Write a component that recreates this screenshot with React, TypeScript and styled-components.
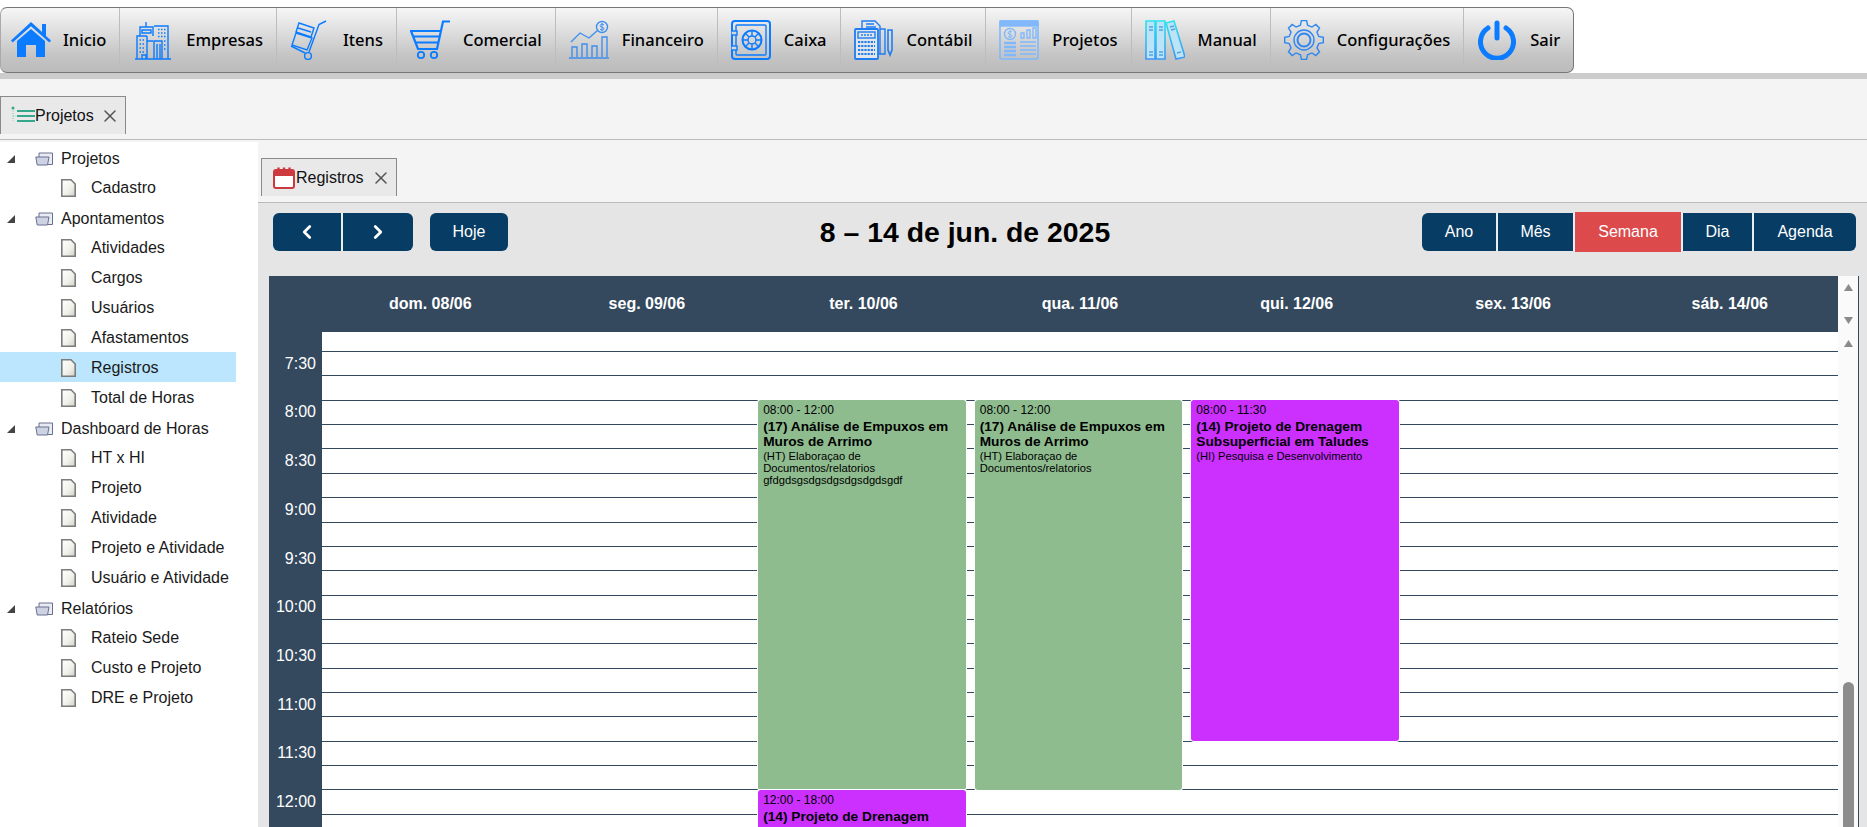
import React from 'react'
import styled, { createGlobalStyle } from 'styled-components'
import { ChevronLeft, ChevronRight, X } from 'lucide-react'

const GlobalStyle = createGlobalStyle`
  html, body {
    margin: 0;
    padding: 0;
    background: #f4f4f4;
    font-family: "Liberation Sans", Arial, sans-serif;
    overflow: hidden;
  }
`

const Page = styled.div`
  height: 100vh;
  display: flex;
  flex-direction: column;
  overflow: hidden;
`
const TopArea = styled.header`
  background: #fff;
  padding-top: 7px;
  border-bottom: 6px solid #cccccc;
`
const Toolbar = styled.nav`
  width: 1574px;
  height: 66px;
  box-sizing: border-box;
  display: flex;
  background: linear-gradient(#f6f6f6 0%, #e6e6e6 25%, #c4c4c4 75%, #bcbcbc 100%);
  border: 1px solid #777;
  border-left-color: #aaa;
  border-radius: 7px;
`
const ToolItem = styled.a`
  display: flex;
  align-items: center;
  gap: 13px;
  padding: 0 13px 0 13px;
  border-right: 1px solid #bdbdbd;
  font-family: "Noto Sans", "Open Sans", sans-serif;
  font-weight: 500;
  font-size: 16.5px;
  line-height: 22px;
  color: #000;
  &:first-child { padding-left: 10px; gap: 12px; }
  &:last-child { border-right: 0; }
`
const TabStrip = styled.div`
  height: 61px;
  box-sizing: border-box;
  padding-top: 17px;
  padding-left: ${p => p.$inset}px;
  background: #f4f4f4;
  border-bottom: 1px solid #bbb;
  flex: none;
`
const InnerStrip = styled(TabStrip)`
  height: 63px;
  padding-top: 18px;
`
const Tab = styled.div`
  display: inline-flex;
  align-items: center;
  height: 38px;
  box-sizing: border-box;
  padding: 0 5px 0 ${p => p.$pad}px;
  gap: ${p => p.$gap}px;
  background: #e9e9e9;
  border: 1px solid #8a8a8a;
  border-bottom: 0;
  font-size: 16px;
  color: #111;
`
const CloseIcon = styled(X)`
  margin-left: 6px;
  color: #555;
`
const Main = styled.div`
  flex: 1;
  display: flex;
  min-height: 0;
`
const Sidebar = styled.aside`
  width: 258px;
  flex: none;
  box-sizing: border-box;
  margin-top: 2px;
  padding-right: 22px;
  background: #fff;
`
const TreeRow = styled.div`
  height: 30px;
  box-sizing: border-box;
  display: flex;
  align-items: center;
  font-size: 16px;
  color: #1a1a1a;
  background: ${p => (p.$selected ? '#bbe6fd' : 'transparent')};
  padding-left: ${p => (p.$parent ? 7 : 61)}px;
  padding-top: ${p => (p.$parent ? 3 : 1)}px;
`
const TreeLabel = styled.span`
  margin-left: ${p => (p.$parent ? 8 : 15)}px;
`
const Panel = styled.section`
  flex: 1;
  min-width: 0;
  display: flex;
  flex-direction: column;
  background: #e5e5e5;
`
const Calendar = styled.div`
  flex: 1;
  min-height: 0;
  padding: 9px 8px 0 11px;
  display: flex;
  flex-direction: column;
`
const CalToolbar = styled.div`
  display: flex;
  justify-content: space-between;
  align-items: center;
  height: 40px;
  padding: 0 3px 0 4px;
  margin-bottom: 24px;
`
const ButtonGroup = styled.div`
  display: flex;
  align-items: center;
  gap: ${p => p.$gap || 0}px;
`
const CalTitle = styled.h2`
  margin: 0;
  font-size: 28.4px;
  font-weight: 700;
  color: #000;
`
const CalButton = styled.button`
  height: ${p => (p.$active ? 40 : 38)}px;
  width: ${p => p.$w}px;
  padding: 0;
  display: flex;
  align-items: center;
  justify-content: center;
  border: 0;
  border-right: ${p => (p.$joined ? '2px solid #e8eef2' : '0')};
  border-radius: ${p => p.$radius || '0'};
  background: ${p => (p.$active ? '#dc4a4b' : '#073c64')};
  color: #fff;
  font-family: inherit;
  font-size: 16px;
`
const CalFrame = styled.div`
  flex: 1;
  min-height: 0;
  display: flex;
  overflow: hidden;
  border-right: 1px solid #34495e;
`
const CalMain = styled.div`
  flex: 1;
  min-width: 0;
  display: flex;
  flex-direction: column;
`
const DayHeader = styled.div`
  height: 56px;
  flex: none;
  display: flex;
  background: #34495e;
  color: #fff;
  font-size: 16px;
  font-weight: 700;
`
const Gutter = styled.div`
  width: 53px;
  flex: none;
  background: #34495e;
`
const DayName = styled.div`
  flex: 1;
  display: flex;
  align-items: center;
  justify-content: center;
`
const SlotArea = styled.div`
  position: relative;
  flex: 1;
  overflow: hidden;
  background: #fff;
`
const Slot = styled.div`
  display: flex;
  height: ${p => p.$h}px;
  box-sizing: border-box;
`
const SlotLabel = styled(Gutter)`
  display: flex;
  align-items: center;
  justify-content: flex-end;
  box-sizing: border-box;
  padding: 1px 6px 0 0;
  color: #fff;
  font-size: 16px;
`
const SlotLine = styled.div`
  flex: 1;
  border-top: ${p => (p.$first ? '0' : '1px solid #34495e')};
`
const EventLayer = styled.div`
  position: absolute;
  inset: 0 0 0 53px;
  display: grid;
  grid-template-columns: repeat(7, 1fr);
`
const DayColumn = styled.div`
  position: relative;
`
const EventCard = styled.div`
  position: absolute;
  left: 3px;
  right: 6px;
  top: ${p => p.$top}px;
  height: ${p => p.$height}px;
  box-sizing: border-box;
  padding: 3px 5px;
  border-radius: 3px;
  background: ${p => p.$color};
  box-shadow: 0 0 0 1px #fff;
  color: #000;
  overflow: hidden;
`
const EventTime = styled.div`
  font-size: 12px;
  line-height: 14px;
`
const EventTitle = styled.div`
  font-size: 13.7px;
  line-height: 15.5px;
  font-weight: 700;
  margin-top: 2px;
`
const EventDesc = styled.div`
  font-size: 11.2px;
  line-height: 12px;
`
const ScrollTrack = styled.div`
  width: 20px;
  flex: none;
  display: flex;
  flex-direction: column;
  align-items: center;
  background: #fafafa;
  padding-top: 8px;
`
const ScrollArrow = styled.svg`
  width: 9px;
  height: 7px;
  fill: #8a8a8a;
  margin-bottom: ${p => p.$after}px;
  flex: none;
`
const ScrollThumb = styled.div`
  margin-top: 335px;
  width: 11px;
  flex: 1;
  background: #8c8c8c;
  border-radius: 6px 6px 0 0;
`
const IconSvg = styled.svg`
  flex: none;
  width: ${p => p.$w || 40}px;
  height: 40px;
  fill: none;
  stroke: ${p => p.$color || '#0b7bff'};
  stroke-width: 1.4;
`

// gear outline, 8 teeth
const gearPath = () => {
  const pts: string[] = []
  const teeth = 8
  for (let i = 0; i < teeth; i++) {
    const a = (i / teeth) * Math.PI * 2
    const step = (Math.PI * 2) / teeth
    const add = (r: number, off: number) => {
      const x = 20 + r * Math.sin(a + off * step)
      const y = 20 - r * Math.cos(a + off * step)
      pts.push(`${x.toFixed(2)} ${y.toFixed(2)}`)
    }
    add(15.2, -0.3)
    add(19.5, -0.17)
    add(19.5, 0.17)
    add(15.2, 0.3)
  }
  return 'M' + pts.join('L') + 'Z'
}

const HomeIcon = () => (
  <IconSvg viewBox="0 0 40 40">
    <path stroke="none" fill="#0b7bff" d="M20 2 L31 12 V4 H35 V16 L40 20.5 L38.4 22.4 L20 6.2 L1.6 22.4 L0 20.5Z" />
    <path stroke="none" fill="#0b7bff" d="M6 21 L20 9 L34 21 V37 H25 V25 H15 V37 H6Z" />
  </IconSvg>
)
const BuildingsIcon = () => (
  <IconSvg viewBox="0 0 40 40" $w={40}>
    <path d="M2 39 H38 M4 39 V16 H14 M7 16 V7 H20 V16 M13 7 V2 M21 39 V21 H29 V39 M24 39 V24 M27 39 V24 M21 6 H35 V39 M9 10 H18 V13 H9Z" />
    <path strokeDasharray="1.5 1.5" d="M6.5 20 H12 M6.5 24 H12 M6.5 28 H12 M6.5 32 H12 M25 9.5 H33 M25 13 H33 M25 16.5 H33 M31 21 H33.5 M31 25 H33.5 M31 29 H33.5" />
    <path d="M9 39 V35 H13 V39 M14 39 V16 M14 21 H20" />
  </IconSvg>
)
const TruckIcon = () => (
  <IconSvg viewBox="0 0 40 40">
    <path d="M36 1 L29 4.5 L19 32" />
    <path d="M1 26 L15 33" />
    <circle cx="18" cy="36" r="3.4" />
    <path d="M9 3 L24 8 L21 17 L6 12Z M6 13 L22 18 L17 30 L2 25Z M8 8 L21 12" />
  </IconSvg>
)
const CartIcon = () => (
  <IconSvg viewBox="0 0 40 40" $w={40}>
    <path strokeWidth="2.2" d="M40 1.5 H33 L27 29 H8 L1 11 H31" />
    <path strokeWidth="2.2" fill="none" d="M3.5 16.5 H29.5 M6 22.5 H28" />
    <circle cx="11" cy="35" r="3.2" strokeWidth="1.8" />
    <circle cx="24" cy="35" r="3.2" strokeWidth="1.8" />
  </IconSvg>
)
const FinanceIcon = () => (
  <IconSvg viewBox="0 0 40 40" $color="#3e8ff0">
    <circle cx="33" cy="7" r="5.5" />
    <path strokeWidth="1" d="M35 5 C34 3.5 31 4 31 5.7 C31 7.6 35 6.6 35 8.7 C35 10.4 32 10.6 31 9 M33 3 V11.2" />
    <path d="M0 38 H40 M3 37 V27 H8 V37 M13 37 V24 H18 V37 M23 37 V26 H28 V37 M33 37 V17 H38 V37" />
    <path d="M2 22 L11 13 L20 18 L29 10" />
  </IconSvg>
)
const SafeIcon = () => (
  <IconSvg viewBox="0 0 40 40" strokeWidth="2">
    <rect x="1" y="1" width="38" height="38" rx="3" strokeWidth="2" />
    <rect x="5" y="5" width="30" height="30" rx="1" />
    <circle cx="21" cy="20" r="9.5" strokeWidth="2" />
    <circle cx="21" cy="20" r="4" />
    <path strokeWidth="1.4" d="M21 10.5 V16 M21 24 V29.5 M11.5 20 H17 M25 20 H30.5 M14.3 13.3 L18 17 M24 23 L27.7 26.7 M27.7 13.3 L24 17 M18 23 L14.3 26.7" />
    <rect x="0" y="11" width="6" height="4" fill="#d6d6d6" />
    <rect x="0" y="26" width="6" height="4" fill="#d6d6d6" />
  </IconSvg>
)
const CalculatorIcon = () => (
  <IconSvg viewBox="0 0 40 40" $color="#1f7df0">
    <rect x="1" y="9" width="23" height="30" rx="1" fill="#e2e6ec" strokeWidth="1.8" />
    <path d="M8 9 V1 H21 L26 6 V34 H24 M26 9 H31 V34 H24 M12 4 H20 M12 7 H22" />
    <rect x="4" y="12" width="17" height="6" />
    <path d="M7 15 H18" strokeDasharray="2 1" />
    <path strokeWidth="2" strokeDasharray="2.2 1" d="M4 22 H21 M4 26 H21 M4 30 H21 M4 34 H21" />
    <path d="M34 10 H38 V30 L36 35 L34 30Z" strokeWidth="1.6" />
  </IconSvg>
)
const ReportIcon = () => (
  <IconSvg viewBox="0 0 40 40" $color="#80b8fb">
    <rect x="1" y="1" width="38" height="38" rx="2" strokeWidth="1.6" />
    <rect x="1" y="1" width="38" height="5" fill="#80b8fb" />
    <circle cx="11" cy="14" r="5.5" />
    <path d="M13 12 C12 11 9 11 9 13 C9 15 13 14 13 16 C13 17.5 10 17.5 9 16.5 M11 10 V18" strokeWidth="1" />
    <path strokeWidth="2.5" d="M5 23 H17 M5 27 H17 M5 31 H17 M5 35 H17" />
    <path d="M22 18 V13 H25 V18Z M28 18 V10 H31 V18Z M34 18 V8 H37 V18Z M21 22 H37 M21 26 H37 M21 30 H37 M21 34 H37" />
  </IconSvg>
)
const BooksIcon = () => (
  <IconSvg viewBox="0 0 40 40">
    <defs>
      <linearGradient id="bookGrad" x1="0" y1="0" x2="0" y2="1">
        <stop offset="0" stopColor="#2ee3ee" />
        <stop offset="1" stopColor="#3c97f4" />
      </linearGradient>
    </defs>
    <path stroke="url(#bookGrad)" fill="#bde4f6" strokeWidth="1.6" d="M1 1 H10 V39 H1Z M11 1 H20 V39 H11Z M21 3 L29 1 L40 37 L31 39Z" />
    <path stroke="#4da4ea" strokeWidth="1.6" d="M4 7 H8 M4 10 H8 M14 7 H18 M14 10 H18 M25 7 L29 6 M26 10 L30 9 M4 32 H8 M4 35 H8 M14 32 H18 M14 35 H18 M32 33 L36 32" />
  </IconSvg>
)
const GearIcon = () => (
  <IconSvg viewBox="0 0 40 40" $color="#2f86f0">
    <path d={gearPath()} />
    <circle cx="20" cy="20" r="10" />
    <circle cx="20" cy="20" r="6.5" strokeWidth="2" />
  </IconSvg>
)
const PowerIcon = () => (
  <IconSvg viewBox="0 0 40 40" strokeWidth="4">
    <path strokeWidth="5" strokeLinecap="round" d="M11 8 A16.5 16.5 0 1 0 29 8" />
    <path strokeWidth="5" strokeLinecap="round" d="M20 3 V18" />
  </IconSvg>
)

const ListTabIcon = styled.svg`
  width: 24px;
  height: 20px;
  flex: none;
`
const ProjectTabIcon = () => (
  <ListTabIcon viewBox="0 0 24 20">
    <path stroke="#36a78c" strokeWidth="2.2" d="M6 5 H24 M6 10 H24 M6 15 H24" />
    <path stroke="#79c7b2" strokeWidth="1" strokeDasharray="1 1.5" d="M2 2 V15 M2 10 H5" />
    <circle cx="2" cy="2" r="1.5" fill="#36a78c" />
  </ListTabIcon>
)
const CalTabIcon = styled.svg`
  width: 22px;
  height: 22px;
  flex: none;
`
const RegisterTabIcon = () => (
  <CalTabIcon viewBox="0 0 22 22">
    <rect x="1" y="3" width="20" height="18" rx="2" fill="#fff" stroke="#cc3a3f" strokeWidth="2" />
    <rect x="1" y="3" width="20" height="6" fill="#cc3a3f" />
    <path stroke="#cc3a3f" strokeWidth="2.4" d="M5.5 0.5 V4 M16.5 0.5 V4 M11 0.5 V4" />
  </CalTabIcon>
)

const TreeIcon = styled.svg`
  flex: none;
`
const FolderGlyph = styled(TreeIcon)`
  margin-left: 20px;
`
const Arrow = () => (
  <TreeIcon width="8" height="8" viewBox="0 0 8 8">
    <path d="M8 0 V8 H0Z" fill="#444" />
  </TreeIcon>
)
const FolderIcon = () => (
  <FolderGlyph width="18" height="14" viewBox="0 0 18 14">
    <path d="M4 1 H17.5 V12.5 H4Z" fill="#e8ebf2" stroke="#69718f" />
    <path d="M0.8 5 H14 L12.5 13 H2.2Z" fill="#cdd3e3" stroke="#69718f" />
  </FolderGlyph>
)
const FileIcon = () => (
  <TreeIcon width="15" height="18" viewBox="0 0 15 18">
    <defs>
      <linearGradient id="fileGrad" x1="0" y1="0" x2="1" y2="1">
        <stop offset="0" stopColor="#fff" />
        <stop offset="0.6" stopColor="#f0f0ea" />
        <stop offset="1" stopColor="#cfcfc4" />
      </linearGradient>
    </defs>
    <path d="M0.8 0.8 H10 L14.2 5 V17.2 H0.8Z" fill="url(#fileGrad)" stroke="#7c7c7c" strokeWidth="1.6" />
  </TreeIcon>
)

const menu = [
  { label: 'Inicio', icon: <HomeIcon /> },
  { label: 'Empresas', icon: <BuildingsIcon /> },
  { label: 'Itens', icon: <TruckIcon /> },
  { label: 'Comercial', icon: <CartIcon /> },
  { label: 'Financeiro', icon: <FinanceIcon /> },
  { label: 'Caixa', icon: <SafeIcon /> },
  { label: 'Contábil', icon: <CalculatorIcon /> },
  { label: 'Projetos', icon: <ReportIcon /> },
  { label: 'Manual', icon: <BooksIcon /> },
  { label: 'Configurações', icon: <GearIcon /> },
  { label: 'Sair', icon: <PowerIcon /> },
]

const tree = [
  { label: 'Projetos', children: ['Cadastro'] },
  { label: 'Apontamentos', children: ['Atividades', 'Cargos', 'Usuários', 'Afastamentos', 'Registros', 'Total de Horas'] },
  { label: 'Dashboard de Horas', children: ['HT x HI', 'Projeto', 'Atividade', 'Projeto e Atividade', 'Usuário e Atividade'] },
  { label: 'Relatórios', children: ['Rateio Sede', 'Custo e Projeto', 'DRE e Projeto'] },
]

const days = ['dom. 08/06', 'seg. 09/06', 'ter. 10/06', 'qua. 11/06', 'qui. 12/06', 'sex. 13/06', 'sáb. 14/06']

const SLOT = 24.37
const FIRST_SLOT = 19
const times = ['7:30', '8:00', '8:30', '9:00', '9:30', '10:00', '10:30', '11:00', '11:30', '12:00', '12:30']

const GREEN = '#8fbc8f'
const PURPLE = '#cb30ff'
const EIGHT = FIRST_SLOT + SLOT * 2

const events = [
  {
    day: 2, start: 0, slots: 16, color: GREEN, time: '08:00 - 12:00',
    title: '(17) Análise de Empuxos em Muros de Arrimo',
    desc: ['(HT) Elaboraçao de Documentos/relatorios', 'gfdgdsgsdgsdgsdgsdgdsgdf'],
  },
  {
    day: 2, start: 16, slots: 24, color: PURPLE, time: '12:00 - 18:00',
    title: '(14) Projeto de Drenagem Subsuperficial em Taludes',
    desc: ['(HI) Pesquisa e Desenvolvimento'],
  },
  {
    day: 3, start: 0, slots: 16, color: GREEN, time: '08:00 - 12:00',
    title: '(17) Análise de Empuxos em Muros de Arrimo',
    desc: ['(HT) Elaboraçao de Documentos/relatorios'],
  },
  {
    day: 4, start: 0, slots: 14, color: PURPLE, time: '08:00 - 11:30',
    title: '(14) Projeto de Drenagem Subsuperficial em Taludes',
    desc: ['(HI) Pesquisa e Desenvolvimento'],
  },
]

export default function App() {
  return (
    <Page>
      <GlobalStyle />
      <TopArea>
        <Toolbar>
          {menu.map(m => (
            <ToolItem key={m.label}>
              {m.icon}
              <span>{m.label}</span>
            </ToolItem>
          ))}
        </Toolbar>
      </TopArea>
      <TabStrip $inset={0}>
        <Tab $pad={10} $gap={0}>
          <ProjectTabIcon />
          Projetos
          <CloseIcon size={20} strokeWidth={1.8} />
        </Tab>
      </TabStrip>
      <Main>
        <Sidebar>
          {tree.map(group => (
            <div key={group.label}>
              <TreeRow $parent>
                <Arrow />
                <FolderIcon />
                <TreeLabel $parent>{group.label}</TreeLabel>
              </TreeRow>
              {group.children.map(c => (
                <TreeRow key={c} $selected={c === 'Registros'}>
                  <FileIcon />
                  <TreeLabel>{c}</TreeLabel>
                </TreeRow>
              ))}
            </div>
          ))}
        </Sidebar>
        <Panel>
          <InnerStrip $inset={3}>
            <Tab $pad={11} $gap={1}>
              <RegisterTabIcon />
              Registros
              <CloseIcon size={20} strokeWidth={1.8} />
            </Tab>
          </InnerStrip>
          <Calendar>
            <CalToolbar>
              <ButtonGroup $gap={17}>
                <ButtonGroup>
                  <CalButton $w={70} $joined $radius="6px 0 0 6px"><ChevronLeft size={22} strokeWidth={3} /></CalButton>
                  <CalButton $w={70} $radius="0 6px 6px 0"><ChevronRight size={22} strokeWidth={3} /></CalButton>
                </ButtonGroup>
                <CalButton $w={78} $radius="6px">Hoje</CalButton>
              </ButtonGroup>
              <CalTitle>8 – 14 de jun. de 2025</CalTitle>
              <ButtonGroup>
                <CalButton $w={76} $joined $radius="6px 0 0 6px">Ano</CalButton>
                <CalButton $w={77} $joined>Mês</CalButton>
                <CalButton $w={108} $joined $active>Semana</CalButton>
                <CalButton $w={71} $joined>Dia</CalButton>
                <CalButton $w={102} $radius="0 6px 6px 0">Agenda</CalButton>
              </ButtonGroup>
            </CalToolbar>
            <CalFrame>
              <CalMain>
                <DayHeader>
                  <Gutter />
                  {days.map(d => <DayName key={d}>{d}</DayName>)}
                </DayHeader>
                <SlotArea>
                  <Slot $h={FIRST_SLOT}>
                    <Gutter />
                    <SlotLine $first />
                  </Slot>
                  {times.flatMap(t => [
                    <Slot key={t} $h={SLOT}>
                      <SlotLabel>{t}</SlotLabel>
                      <SlotLine />
                    </Slot>,
                    <Slot key={t + '-half'} $h={SLOT}>
                      <Gutter />
                      <SlotLine />
                    </Slot>,
                  ])}
                  <EventLayer>
                    {days.map((d, i) => (
                      <DayColumn key={d}>
                        {events.filter(e => e.day === i).map(e => (
                          <EventCard
                            key={e.time}
                            $top={EIGHT + e.start * SLOT}
                            $height={e.slots * SLOT}
                            $color={e.color}
                          >
                            <EventTime>{e.time}</EventTime>
                            <EventTitle>{e.title}</EventTitle>
                            {e.desc.map(line => <EventDesc key={line}>{line}</EventDesc>)}
                          </EventCard>
                        ))}
                      </DayColumn>
                    ))}
                  </EventLayer>
                </SlotArea>
              </CalMain>
              <ScrollTrack>
                <ScrollArrow viewBox="0 0 9 7" $after={26}><path d="M4.5 0 L9 7 H0Z" /></ScrollArrow>
                <ScrollArrow viewBox="0 0 9 7" $after={16}><path d="M4.5 7 L9 0 H0Z" /></ScrollArrow>
                <ScrollArrow viewBox="0 0 9 7" $after={0}><path d="M4.5 0 L9 7 H0Z" /></ScrollArrow>
                <ScrollThumb />
              </ScrollTrack>
            </CalFrame>
          </Calendar>
        </Panel>
      </Main>
    </Page>
  )
}
